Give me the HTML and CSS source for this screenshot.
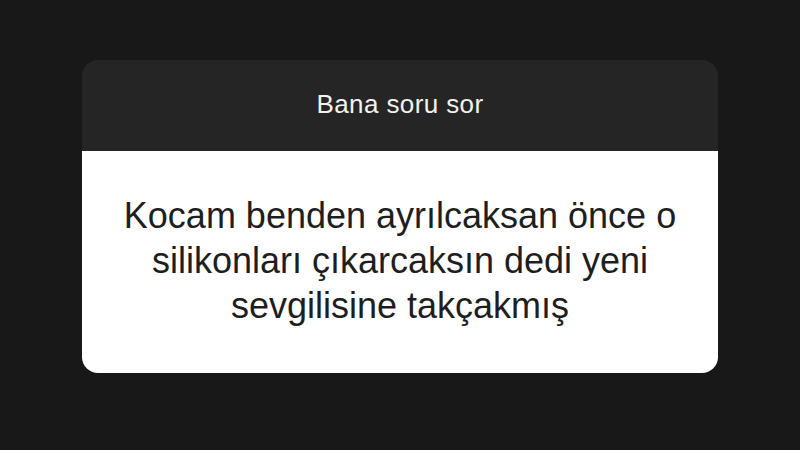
FILE: index.html
```html
<!DOCTYPE html>
<html lang="tr">
<head>
    <meta charset="UTF-8">
    <title>Bana soru sor</title>
    <link rel="stylesheet" href="styles.css">
</head>
<body>
    <div class="card">
        <div class="card-header">Bana soru sor</div>
        <div class="card-body">
            <p class="answer">Kocam benden ayrılcaksan önce o silikonları çıkarcaksın dedi yeni sevgilisine takçakmış</p>
        </div>
    </div>
</body>
</html>
```

FILE: styles.css
```css
body {
    margin: 0;
    padding: 60px 0 0;
    background: #181818;
    font-family: "Liberation Sans", Arial, sans-serif;
}

.card {
    width: 636px;
    margin: 0 0 0 82px;
    border-radius: 16px;
    overflow: hidden;
}

.card-header {
    height: 91px;
    background: #252525;
    color: #f2f2f2;
    font-size: 26px;
    letter-spacing: 0.4px;
    display: flex;
    align-items: center;
    justify-content: center;
    padding-bottom: 2px;
    box-sizing: border-box;
}

.card-body {
    height: 222px;
    background: #ffffff;
    display: flex;
    align-items: center;
    justify-content: center;
    padding: 0 28px 4px;
    box-sizing: border-box;
}

.answer {
    margin: 0;
    color: #1e1e1e;
    font-size: 36px;
    line-height: 45px;
    text-align: center;
}
```
